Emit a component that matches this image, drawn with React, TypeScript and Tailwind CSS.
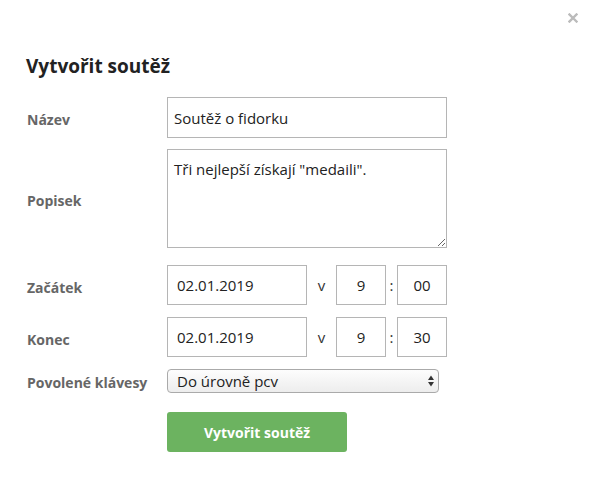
const Label = ({ children }: { children: React.ReactNode }) => (
    <div className="w-[167px] shrink-0 whitespace-nowrap pl-[27px] pt-[4px] text-[14px] font-bold text-[#666666]">{children}</div>
)

const Field = ({ value, className }: { value: string; className: string }) => (
    <input
        readOnly
        value={value}
        className={`h-[40px] border border-[#b5b5b5] bg-white text-[15px] text-[#222222] outline-none ${className}`}
    />
)

const App = () => {
    return (
        <div className="relative w-[590px] h-[480px] bg-white font-['Open_Sans',sans-serif]">
            {/* close */}
            <button className="absolute left-[568px] top-[13px]">
                <svg width="10" height="10" viewBox="0 0 10 10">
                    <path d="M1.5 1.5 L8.5 8.5 M8.5 1.5 L1.5 8.5" stroke="#bbbbbb" strokeWidth="2.4" strokeLinecap="square" />
                </svg>
            </button>

            <div className="pt-[52px]">
                {/* title */}
                <h1 className="pl-[26px] text-[19px] font-bold leading-[28px] text-[#222222]">Vytvořit soutěž</h1>

                <div className="mt-[17px] flex flex-col">
                    {/* name */}
                    <div className="flex items-center">
                        <Label>Název</Label>
                        <Field value="Soutěž o fidorku" className="w-[280px] h-[41px] px-[6px]" />
                    </div>

                    {/* description */}
                    <div className="mt-[11px] flex items-center">
                        <Label>Popisek</Label>
                        <textarea
                            readOnly
                            value={'Tři nejlepší získají "medaili".'}
                            className="w-[280px] h-[99px] border border-[#b5b5b5] px-[6px] pt-[9px] text-[15px] leading-[20px] text-[#222222] outline-none"
                        />
                    </div>

                    {/* start */}
                    <div className="mt-[17px] flex items-center">
                        <Label>Začátek</Label>
                        <Field value="02.01.2019" className="w-[140px] px-[9px]" />
                        <span className="w-[29px] text-center text-[15px] text-[#333333]">v</span>
                        <Field value="9" className="w-[50px] text-center" />
                        <span className="w-[11px] text-center text-[15px] text-[#333333]">:</span>
                        <Field value="00" className="w-[50px] text-center" />
                    </div>

                    {/* end */}
                    <div className="mt-[12px] flex items-center">
                        <Label>Konec</Label>
                        <Field value="02.01.2019" className="w-[140px] px-[9px]" />
                        <span className="w-[29px] text-center text-[15px] text-[#333333]">v</span>
                        <Field value="9" className="w-[50px] text-center" />
                        <span className="w-[11px] text-center text-[15px] text-[#333333]">:</span>
                        <Field value="30" className="w-[50px] text-center" />
                    </div>

                    {/* keys */}
                    <div className="mt-[11px] flex items-center">
                        <Label>Povolené klávesy</Label>
                        <div className="relative">
                            <select className="block w-[272px] h-[24px] appearance-none rounded-[4px] border border-[#aaaaaa] bg-gradient-to-b from-[#fdfdfd] to-[#ededed] pl-[9px] text-[15px] leading-[20px] text-[#222222] outline-none">
                                <option>Do úrovně pcv</option>
                            </select>
                            {/* arrows */}
                            <svg className="pointer-events-none absolute right-[5px] top-[6px]" width="6" height="12" viewBox="0 0 6 12">
                                <path d="M3 0.5 L6 5 L0 5 Z" fill="#333333" />
                                <path d="M0 7 L6 7 L3 11.5 Z" fill="#333333" />
                            </svg>
                        </div>
                    </div>

                    {/* submit */}
                    <div className="mt-[19px] pl-[167px]">
                        <button className="w-[180px] h-[40px] rounded-[3px] bg-[#6cb360] text-[14px] font-bold text-white">
                            Vytvořit soutěž
                        </button>
                    </div>
                </div>
            </div>
        </div>
    )
}

export default App
